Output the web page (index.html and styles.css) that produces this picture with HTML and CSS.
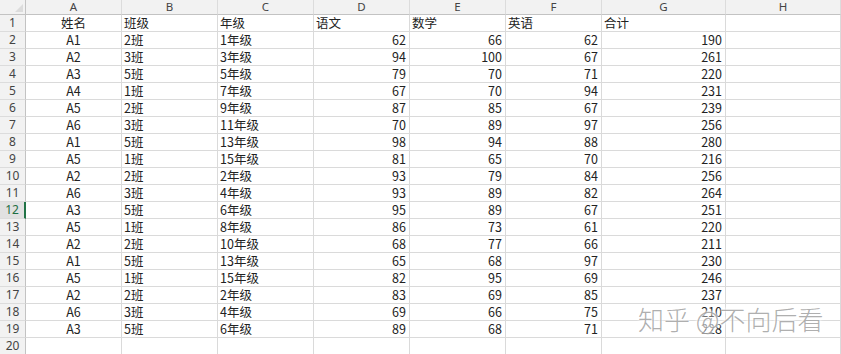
FILE: index.html
```html
<!DOCTYPE html>
<html lang="zh">
<head>
<meta charset="utf-8">
<link rel="stylesheet" href="styles.css">
</head>
<body>
<div class="sheet">
  <div class="row head">
    <div class="corner"><span class="tri"></span></div>
    <div class="ch">A</div><div class="ch">B</div><div class="ch">C</div><div class="ch">D</div><div class="ch">E</div><div class="ch">F</div><div class="ch">G</div><div class="ch">H</div>
  </div>
  <div class="row"><div class="rh">1</div><div class="c ctr">姓名</div><div class="c">班级</div><div class="c">年级</div><div class="c">语文</div><div class="c">数学</div><div class="c">英语</div><div class="c">合计</div><div class="c"></div></div>
  <div class="row"><div class="rh">2</div><div class="c ctr">A1</div><div class="c">2班</div><div class="c">1年级</div><div class="c n">62</div><div class="c n">66</div><div class="c n">62</div><div class="c n">190</div><div class="c"></div></div>
  <div class="row"><div class="rh">3</div><div class="c ctr">A2</div><div class="c">3班</div><div class="c">3年级</div><div class="c n">94</div><div class="c n">100</div><div class="c n">67</div><div class="c n">261</div><div class="c"></div></div>
  <div class="row"><div class="rh">4</div><div class="c ctr">A3</div><div class="c">5班</div><div class="c">5年级</div><div class="c n">79</div><div class="c n">70</div><div class="c n">71</div><div class="c n">220</div><div class="c"></div></div>
  <div class="row"><div class="rh">5</div><div class="c ctr">A4</div><div class="c">1班</div><div class="c">7年级</div><div class="c n">67</div><div class="c n">70</div><div class="c n">94</div><div class="c n">231</div><div class="c"></div></div>
  <div class="row"><div class="rh">6</div><div class="c ctr">A5</div><div class="c">2班</div><div class="c">9年级</div><div class="c n">87</div><div class="c n">85</div><div class="c n">67</div><div class="c n">239</div><div class="c"></div></div>
  <div class="row"><div class="rh">7</div><div class="c ctr">A6</div><div class="c">3班</div><div class="c">11年级</div><div class="c n">70</div><div class="c n">89</div><div class="c n">97</div><div class="c n">256</div><div class="c"></div></div>
  <div class="row"><div class="rh">8</div><div class="c ctr">A1</div><div class="c">5班</div><div class="c">13年级</div><div class="c n">98</div><div class="c n">94</div><div class="c n">88</div><div class="c n">280</div><div class="c"></div></div>
  <div class="row"><div class="rh">9</div><div class="c ctr">A5</div><div class="c">1班</div><div class="c">15年级</div><div class="c n">81</div><div class="c n">65</div><div class="c n">70</div><div class="c n">216</div><div class="c"></div></div>
  <div class="row"><div class="rh">10</div><div class="c ctr">A2</div><div class="c">2班</div><div class="c">2年级</div><div class="c n">93</div><div class="c n">79</div><div class="c n">84</div><div class="c n">256</div><div class="c"></div></div>
  <div class="row"><div class="rh">11</div><div class="c ctr">A6</div><div class="c">3班</div><div class="c">4年级</div><div class="c n">93</div><div class="c n">89</div><div class="c n">82</div><div class="c n">264</div><div class="c"></div></div>
  <div class="row"><div class="rh active">12</div><div class="c ctr">A3</div><div class="c">5班</div><div class="c">6年级</div><div class="c n">95</div><div class="c n">89</div><div class="c n">67</div><div class="c n">251</div><div class="c"></div></div>
  <div class="row"><div class="rh">13</div><div class="c ctr">A5</div><div class="c">1班</div><div class="c">8年级</div><div class="c n">86</div><div class="c n">73</div><div class="c n">61</div><div class="c n">220</div><div class="c"></div></div>
  <div class="row"><div class="rh">14</div><div class="c ctr">A2</div><div class="c">2班</div><div class="c">10年级</div><div class="c n">68</div><div class="c n">77</div><div class="c n">66</div><div class="c n">211</div><div class="c"></div></div>
  <div class="row"><div class="rh">15</div><div class="c ctr">A1</div><div class="c">5班</div><div class="c">13年级</div><div class="c n">65</div><div class="c n">68</div><div class="c n">97</div><div class="c n">230</div><div class="c"></div></div>
  <div class="row"><div class="rh">16</div><div class="c ctr">A5</div><div class="c">1班</div><div class="c">15年级</div><div class="c n">82</div><div class="c n">95</div><div class="c n">69</div><div class="c n">246</div><div class="c"></div></div>
  <div class="row"><div class="rh">17</div><div class="c ctr">A2</div><div class="c">2班</div><div class="c">2年级</div><div class="c n">83</div><div class="c n">69</div><div class="c n">85</div><div class="c n">237</div><div class="c"></div></div>
  <div class="row"><div class="rh">18</div><div class="c ctr">A6</div><div class="c">3班</div><div class="c">4年级</div><div class="c n">69</div><div class="c n">66</div><div class="c n">75</div><div class="c n">210</div><div class="c"></div></div>
  <div class="row"><div class="rh">19</div><div class="c ctr">A3</div><div class="c">5班</div><div class="c">6年级</div><div class="c n">89</div><div class="c n">68</div><div class="c n">71</div><div class="c n">228</div><div class="c"></div></div>
  <div class="row"><div class="rh">20</div><div class="c"></div><div class="c"></div><div class="c"></div><div class="c"></div><div class="c"></div><div class="c"></div><div class="c"></div><div class="c"></div></div>
  <div class="watermark">知乎 @不向后看</div>
</div>
</body>
</html>
```
FILE: styles.css
```css
html, body {
  margin: 0;
  padding: 0;
  background: #fff;
}
body {
  width: 841px;
  height: 354px;
  overflow: hidden;
  font-family: "Noto Sans CJK SC", "Noto Sans", sans-serif;
  font-size: 12.5px;
  color: #222;
}
.sheet {
  position: relative;
  width: 841px;
}
.row {
  display: grid;
  grid-template-columns: 26px 96px 96px 96px 96px 96px 96px 124px 1fr;
  height: 17px;
}
.row.head {
  height: 15px;
}
.row > div {
  box-sizing: border-box;
  border-right: 1px solid #dadada;
  border-bottom: 1px solid #dadada;
  line-height: 16px;
  white-space: nowrap;
  overflow: visible;
}
.corner {
  position: relative;
  background: #f2f2f2;
  border-right: 1px solid #c3c3c3 !important;
  border-bottom: 1px solid #c3c3c3 !important;
}
.tri {
  position: absolute;
  right: 2px;
  bottom: 2px;
  width: 0;
  height: 0;
  border-left: 8px solid transparent;
  border-bottom: 8px solid #dcdcdc;
}
.ch {
  background: #f2f2f2;
  text-align: center;
  color: #444;
  line-height: 14px !important;
  font-family: "Noto Sans", "Noto Sans CJK SC", sans-serif;
  font-size: 11.5px;
  border-right: 1px solid #dcdcdc !important;
  border-bottom: 1px solid #c3c3c3 !important;
}
.rh {
  background: #f2f2f2;
  text-align: center;
  color: #444;
  font-family: "Noto Sans", "Noto Sans CJK SC", sans-serif;
  font-size: 12px;
  border-right: 1px solid #c3c3c3 !important;
  border-bottom: 1px solid #dcdcdc !important;
}
.rh.active {
  background: #e1e1e1;
  color: #1e6e43;
  border-right: 2px solid #217346 !important;
}
.c {
  padding: 0 2px;
  text-align: left;
}
.c.ctr {
  text-align: center;
}
.c.n {
  text-align: right;
  padding-right: 3px;
}
.watermark {
  position: absolute;
  left: 638px;
  top: 303px;
  font-size: 26px;
  line-height: 32px;
  font-weight: 300;
  color: rgba(140, 140, 140, 0.7);
  text-shadow: 0 0 3px #fff, 0 0 3px #fff, 0 0 4px #fff;
}
```
